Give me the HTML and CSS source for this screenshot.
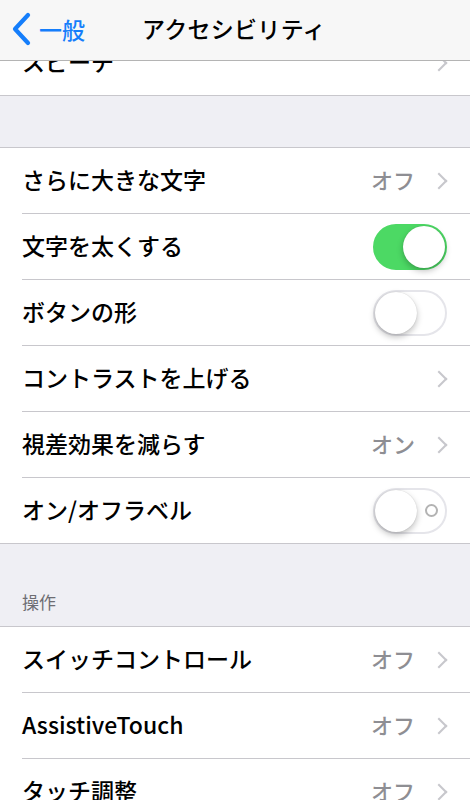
FILE: index.html
```html
<!DOCTYPE html>
<html>
  <head>
    <title>アクセシビリティ</title>
    <link rel="stylesheet" href="styles.css">
  </head>
  <body>
    <div class="navbar">
      <div class="back">
        <svg width="22" height="34" viewBox="0 0 22 34">
          <path d="M17 3 L4 17 L17 31" fill="none" stroke="#157efb" stroke-width="4.2" stroke-linecap="round" stroke-linejoin="round" />
        </svg>
        <span>一般</span>
      </div>
      <div class="title">アクセシビリティ</div>
    </div>

    <div class="screen">
      <div class="group group-first">
        <div class="row">
          <div class="row-body">
            <span class="label">スピーチ</span>
            <span class="chevron"></span>
          </div>
        </div>
      </div>

      <div class="gap"></div>

      <div class="group">
        <div class="row">
          <div class="row-body">
            <span class="label">さらに大きな文字</span>
            <span class="value">オフ</span>
            <span class="chevron"></span>
          </div>
        </div>
        <div class="row">
          <div class="row-body">
            <span class="label">文字を太くする</span>
            <span class="toggle on"><span class="knob"></span></span>
          </div>
        </div>
        <div class="row">
          <div class="row-body">
            <span class="label">ボタンの形</span>
            <span class="toggle"><span class="knob"></span></span>
          </div>
        </div>
        <div class="row">
          <div class="row-body">
            <span class="label">コントラストを上げる</span>
            <span class="chevron"></span>
          </div>
        </div>
        <div class="row">
          <div class="row-body">
            <span class="label">視差効果を減らす</span>
            <span class="value">オン</span>
            <span class="chevron"></span>
          </div>
        </div>
        <div class="row">
          <div class="row-body">
            <span class="label">オン/オフラベル</span>
            <span class="toggle labeled"><span class="knob"></span><span class="off-mark"></span></span>
          </div>
        </div>
      </div>

      <div class="section-head">操作</div>

      <div class="group">
        <div class="row">
          <div class="row-body">
            <span class="label">スイッチコントロール</span>
            <span class="value">オフ</span>
            <span class="chevron"></span>
          </div>
        </div>
        <div class="row">
          <div class="row-body">
            <span class="label">AssistiveTouch</span>
            <span class="value">オフ</span>
            <span class="chevron"></span>
          </div>
        </div>
        <div class="row">
          <div class="row-body">
            <span class="label">タッチ調整</span>
            <span class="value">オフ</span>
            <span class="chevron"></span>
          </div>
        </div>
      </div>
    </div>
  </body>
</html>
```

FILE: styles.css
```css
body,
html {
  margin: 0;
  padding: 0;
  height: 100%;
  width: 100%;
  overflow: hidden;
}

body {
  background: #efeff4;
  font-family: 'Noto Sans CJK JP', 'Noto Sans', sans-serif;
  color: #000;
}

/* nav bar sits on top of the scrolled list */
.navbar {
  position: absolute;
  top: 0;
  left: 0;
  right: 0;
  height: 60px;
  background: #f7f7f7;
  border-bottom: 1px solid #b4b4b4;
  z-index: 2;
  display: flex;
  align-items: center;
}

.back {
  display: flex;
  align-items: center;
  padding-left: 11px;
  color: #157efb;
  font-size: 23px;
  font-weight: 500;
  width: 120px;
  margin-top: -3px;
}

.back svg {
  margin-right: 6px;
}

.title {
  font-size: 23px;
  font-weight: 500;
  margin-left: 11px;
  margin-top: -4px;
  letter-spacing: 0.3px;
}

.screen {
  padding-top: 30px;
}

.group {
  background: #fff;
  border-top: 1px solid #c8c7cc;
  border-bottom: 1px solid #c8c7cc;
}

.group-first {
  border-top: none;
}

.gap {
  height: 51px;
}

.section-head {
  height: 82px;
  box-sizing: border-box;
  padding: 47px 0 0 22px;
  font-size: 17px;
  color: #6d6d72;
  line-height: 22px;
}

.row {
  padding-left: 22px;
}

.row-body {
  height: 65px;
  display: flex;
  align-items: center;
  padding-right: 22px;
  border-bottom: 1px solid #c8c7cc;
}

.row:last-child .row-body {
  border-bottom: none;
}

.label {
  flex: 1;
  font-size: 23px;
  font-weight: 500;
  white-space: nowrap;
  padding-bottom: 4px;
}

.value {
  font-size: 22px;
  font-weight: 500;
  color: #8e8e93;
  margin-right: 18px;
  padding-bottom: 4px;
}

.chevron {
  width: 10px;
  height: 10px;
  border-top: 2.5px solid #c7c7cc;
  border-right: 2.5px solid #c7c7cc;
  transform: rotate(45deg);
  margin-right: 3px;
}

.toggle {
  width: 74px;
  height: 46px;
  box-sizing: border-box;
  border-radius: 23px;
  border: 2px solid #e5e5ea;
  background: #fff;
  display: flex;
  align-items: center;
  margin-right: 1px;
}

.toggle.on {
  background: #4cd964;
  border-color: #4cd964;
  justify-content: flex-end;
}

.knob {
  width: 42px;
  height: 42px;
  border-radius: 50%;
  background: #fff;
  box-shadow: 0 3px 6px rgba(0, 0, 0, 0.25), 0 0 1px rgba(0, 0, 0, 0.2);
}

.off-mark {
  width: 9px;
  height: 9px;
  border: 2px solid #b3b3b3;
  border-radius: 50%;
  margin-left: auto;
  margin-right: 7px;
}
```
